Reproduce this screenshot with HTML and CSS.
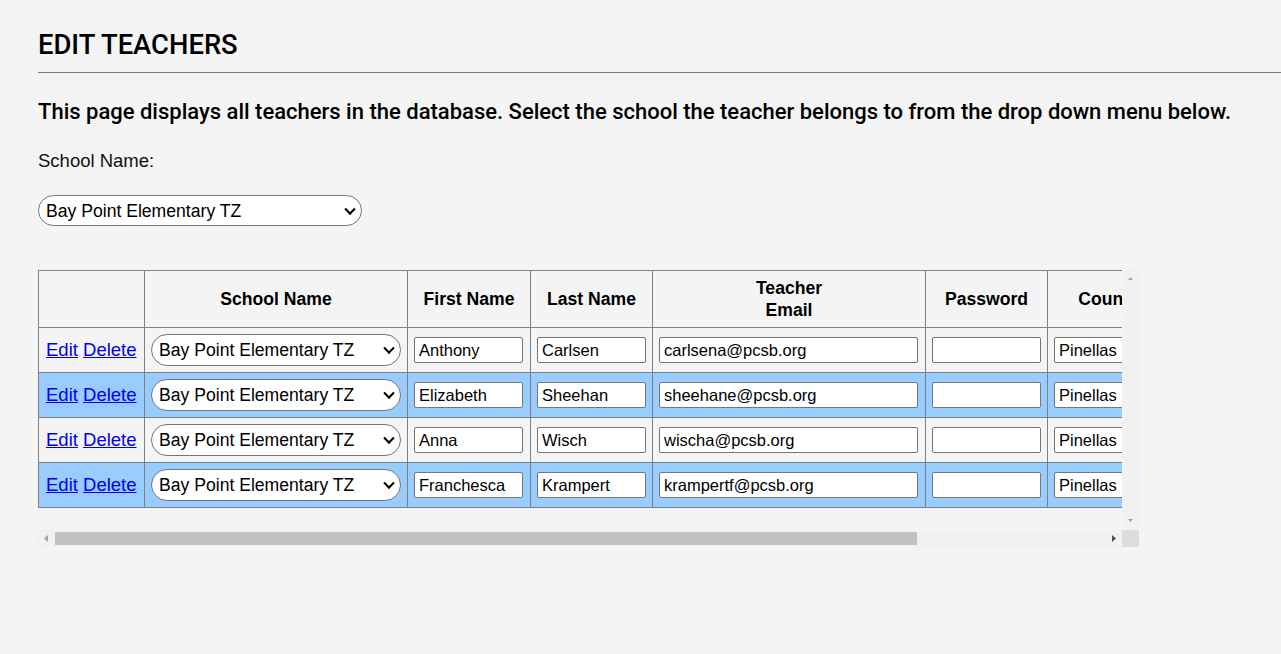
FILE: index.html
```html
<!DOCTYPE html>
<html lang="en">
<head>
<meta charset="utf-8">
<title>Edit Teachers</title>
<link rel="stylesheet" href="styles.css">
</head>
<body>
<main class="page">
  <h1 class="title">EDIT TEACHERS</h1>
  <hr class="rule">
  <p class="intro">This page displays all teachers in the database. Select the school the teacher belongs to from the drop down menu below.</p>
  <label class="field-label" for="school">School Name:</label>
  <span class="select-wrap select-wrap--top">
    <select id="school" class="school-select school-select--top"><option>Bay Point Elementary TZ</option></select>
  </span>
  <div class="table-scroll">
    <div class="table-viewport">
      <table class="teachers">
        <colgroup>
          <col class="c-actions"><col class="c-school"><col class="c-first"><col class="c-last"><col class="c-email"><col class="c-pass"><col class="c-county"><col class="c-extra">
        </colgroup>
        <thead>
          <tr><th></th><th>School Name</th><th>First Name</th><th>Last Name</th><th>Teacher<br>Email</th><th>Password</th><th>County</th><th></th></tr>
        </thead>
        <tbody>
          <tr>
            <td class="actions"><a href="#">Edit</a> <a href="#">Delete</a></td>
            <td><span class="select-wrap"><select class="school-select school-select--row"><option>Bay Point Elementary TZ</option></select></span></td>
            <td><input class="cell-input" type="text" value="Anthony"></td>
            <td><input class="cell-input" type="text" value="Carlsen"></td>
            <td><input class="cell-input cell-input--email" type="text" value="carlsena@pcsb.org"></td>
            <td><input class="cell-input" type="password" value=""></td>
            <td><input class="cell-input" type="text" value="Pinellas"></td>
            <td><input class="cell-input cell-input--extra" type="text" value=""></td>
          </tr>
          <tr class="alt">
            <td class="actions"><a href="#">Edit</a> <a href="#">Delete</a></td>
            <td><span class="select-wrap"><select class="school-select school-select--row"><option>Bay Point Elementary TZ</option></select></span></td>
            <td><input class="cell-input" type="text" value="Elizabeth"></td>
            <td><input class="cell-input" type="text" value="Sheehan"></td>
            <td><input class="cell-input cell-input--email" type="text" value="sheehane@pcsb.org"></td>
            <td><input class="cell-input" type="password" value=""></td>
            <td><input class="cell-input" type="text" value="Pinellas"></td>
            <td><input class="cell-input cell-input--extra" type="text" value=""></td>
          </tr>
          <tr>
            <td class="actions"><a href="#">Edit</a> <a href="#">Delete</a></td>
            <td><span class="select-wrap"><select class="school-select school-select--row"><option>Bay Point Elementary TZ</option></select></span></td>
            <td><input class="cell-input" type="text" value="Anna"></td>
            <td><input class="cell-input" type="text" value="Wisch"></td>
            <td><input class="cell-input cell-input--email" type="text" value="wischa@pcsb.org"></td>
            <td><input class="cell-input" type="password" value=""></td>
            <td><input class="cell-input" type="text" value="Pinellas"></td>
            <td><input class="cell-input cell-input--extra" type="text" value=""></td>
          </tr>
          <tr class="alt">
            <td class="actions"><a href="#">Edit</a> <a href="#">Delete</a></td>
            <td><span class="select-wrap"><select class="school-select school-select--row"><option>Bay Point Elementary TZ</option></select></span></td>
            <td><input class="cell-input" type="text" value="Franchesca"></td>
            <td><input class="cell-input" type="text" value="Krampert"></td>
            <td><input class="cell-input cell-input--email" type="text" value="krampertf@pcsb.org"></td>
            <td><input class="cell-input" type="password" value=""></td>
            <td><input class="cell-input" type="text" value="Pinellas"></td>
            <td><input class="cell-input cell-input--extra" type="text" value=""></td>
          </tr>
        </tbody>
      </table>
    </div>
    <div class="vbar">
      <span class="sb-btn"><svg width="17" height="17" viewBox="0 0 17 17"><path d="M6 10 L8.5 7 L11 10 Z" fill="#a3a3a3"/></svg></span>
      <span class="sb-btn"><svg width="17" height="17" viewBox="0 0 17 17"><path d="M6 6 L11 6 L8.5 9 Z" fill="#a3a3a3"/></svg></span>
    </div>
    <div class="hbar">
      <span class="sb-btn"><svg width="17" height="17" viewBox="0 0 17 17"><path d="M6 8.5 L10 5 L10 12 Z" fill="#a3a3a3"/></svg></span>
      <span class="hbar-track"><span class="hbar-thumb"></span></span>
      <span class="sb-btn"><svg width="17" height="17" viewBox="0 0 17 17"><path d="M7 5 L11 8.5 L7 12 Z" fill="#505050"/></svg></span>
    </div>
    <div class="sb-corner"></div>
  </div>
</main>
</body>
</html>
```

FILE: styles.css
```css
html, body {
  margin: 0;
  background: #f4f4f4;
  color: #000;
  font-family: "Liberation Sans", Arial, sans-serif;
}

.page {
  display: flex;
  flex-direction: column;
  align-items: flex-start;
  padding: 29px 0 0 38px;
}

.title {
  margin: 0;
  font-family: Roboto, "Liberation Sans", sans-serif;
  font-weight: 500;
  font-size: 27.4px;
  line-height: 32px;
  color: #000;
}

.rule {
  align-self: stretch;
  margin: 11px 0 0;
  border: 0;
  height: 1px;
  background: #7a7a7a;
}

.intro {
  margin: 25px 0 0;
  font-family: Roboto, "Liberation Sans", sans-serif;
  font-weight: 500;
  font-size: 22px;
  line-height: 28px;
}

.field-label {
  margin-top: 24px;
  font-size: 18.5px;
  line-height: 21px;
  color: #111;
}

.select-wrap {
  position: relative;
  display: block;
}

.select-wrap--top {
  margin-top: 24px;
}

.select-wrap::after {
  content: "";
  position: absolute;
  right: 8px;
  top: 50%;
  width: 6px;
  height: 6px;
  border-right: 2px solid #000;
  border-bottom: 2px solid #000;
  transform: translateY(-72%) rotate(45deg);
  pointer-events: none;
}

.school-select {
  display: block;
  appearance: none;
  -webkit-appearance: none;
  box-sizing: border-box;
  margin: 0;
  border: 1px solid #767676;
  border-radius: 16px;
  background: #fff;
  padding: 0 30px 0 7px;
  font-family: "Liberation Sans", Arial, sans-serif;
  font-size: 17.6px;
  color: #000;
}

.school-select--top {
  width: 324px;
  height: 31px;
}

.school-select--row {
  width: 250px;
  height: 32px;
}

/* scroll area with its scrollbars drawn as a grid */
.table-scroll {
  margin-top: 44px;
  display: grid;
  grid-template-columns: 1084px 17px;
  grid-template-rows: 260px 17px;
}

.table-viewport {
  overflow: hidden;
}

.vbar {
  display: flex;
  flex-direction: column;
  justify-content: space-between;
  background: #f1f1f1;
}

.hbar {
  display: flex;
  background: #f1f1f1;
}

.sb-btn {
  display: block;
  flex: none;
  width: 17px;
  height: 17px;
}

.sb-btn svg {
  display: block;
}

.hbar-track {
  flex: 1;
  display: flex;
  align-items: center;
}

.hbar-thumb {
  display: block;
  width: 862px;
  height: 13px;
  background: #c1c1c1;
}

.sb-corner {
  background: #dcdcdc;
}

.teachers {
  table-layout: fixed;
  width: 1320px;
  border-collapse: collapse;
  border: 1px solid #808080;
}

.c-actions { width: 106px; }
.c-school { width: 263px; }
.c-first { width: 123px; }
.c-last { width: 122px; }
.c-email { width: 273px; }
.c-pass { width: 122px; }
.c-county { width: 122px; }
.c-extra { width: 189px; }

.teachers th,
.teachers td {
  border: 1px solid #808080;
  padding: 6px;
  white-space: nowrap;
  overflow: hidden;
}

.teachers th {
  font-size: 17.6px;
  font-weight: 700;
  line-height: 22px;
  text-align: center;
  vertical-align: middle;
}

.teachers td {
  font-size: 17.6px;
  line-height: 22px;
  vertical-align: middle;
}

.teachers tr.alt {
  background: #99ccff;
}

.teachers td.actions {
  padding-left: 7px;
  font-size: 18.5px;
}

.actions a {
  color: #0000ee;
  text-decoration: underline;
}

.cell-input {
  display: block;
  box-sizing: border-box;
  margin: 0;
  width: 109px;
  height: 26px;
  border: 1px solid #767676;
  border-radius: 2px;
  background: #fff;
  padding: 0 4px;
  font-family: "Liberation Sans", Arial, sans-serif;
  font-size: 16.5px;
  color: #000;
}

.cell-input--email {
  width: 259px;
}

.cell-input--extra {
  width: 176px;
}
```
